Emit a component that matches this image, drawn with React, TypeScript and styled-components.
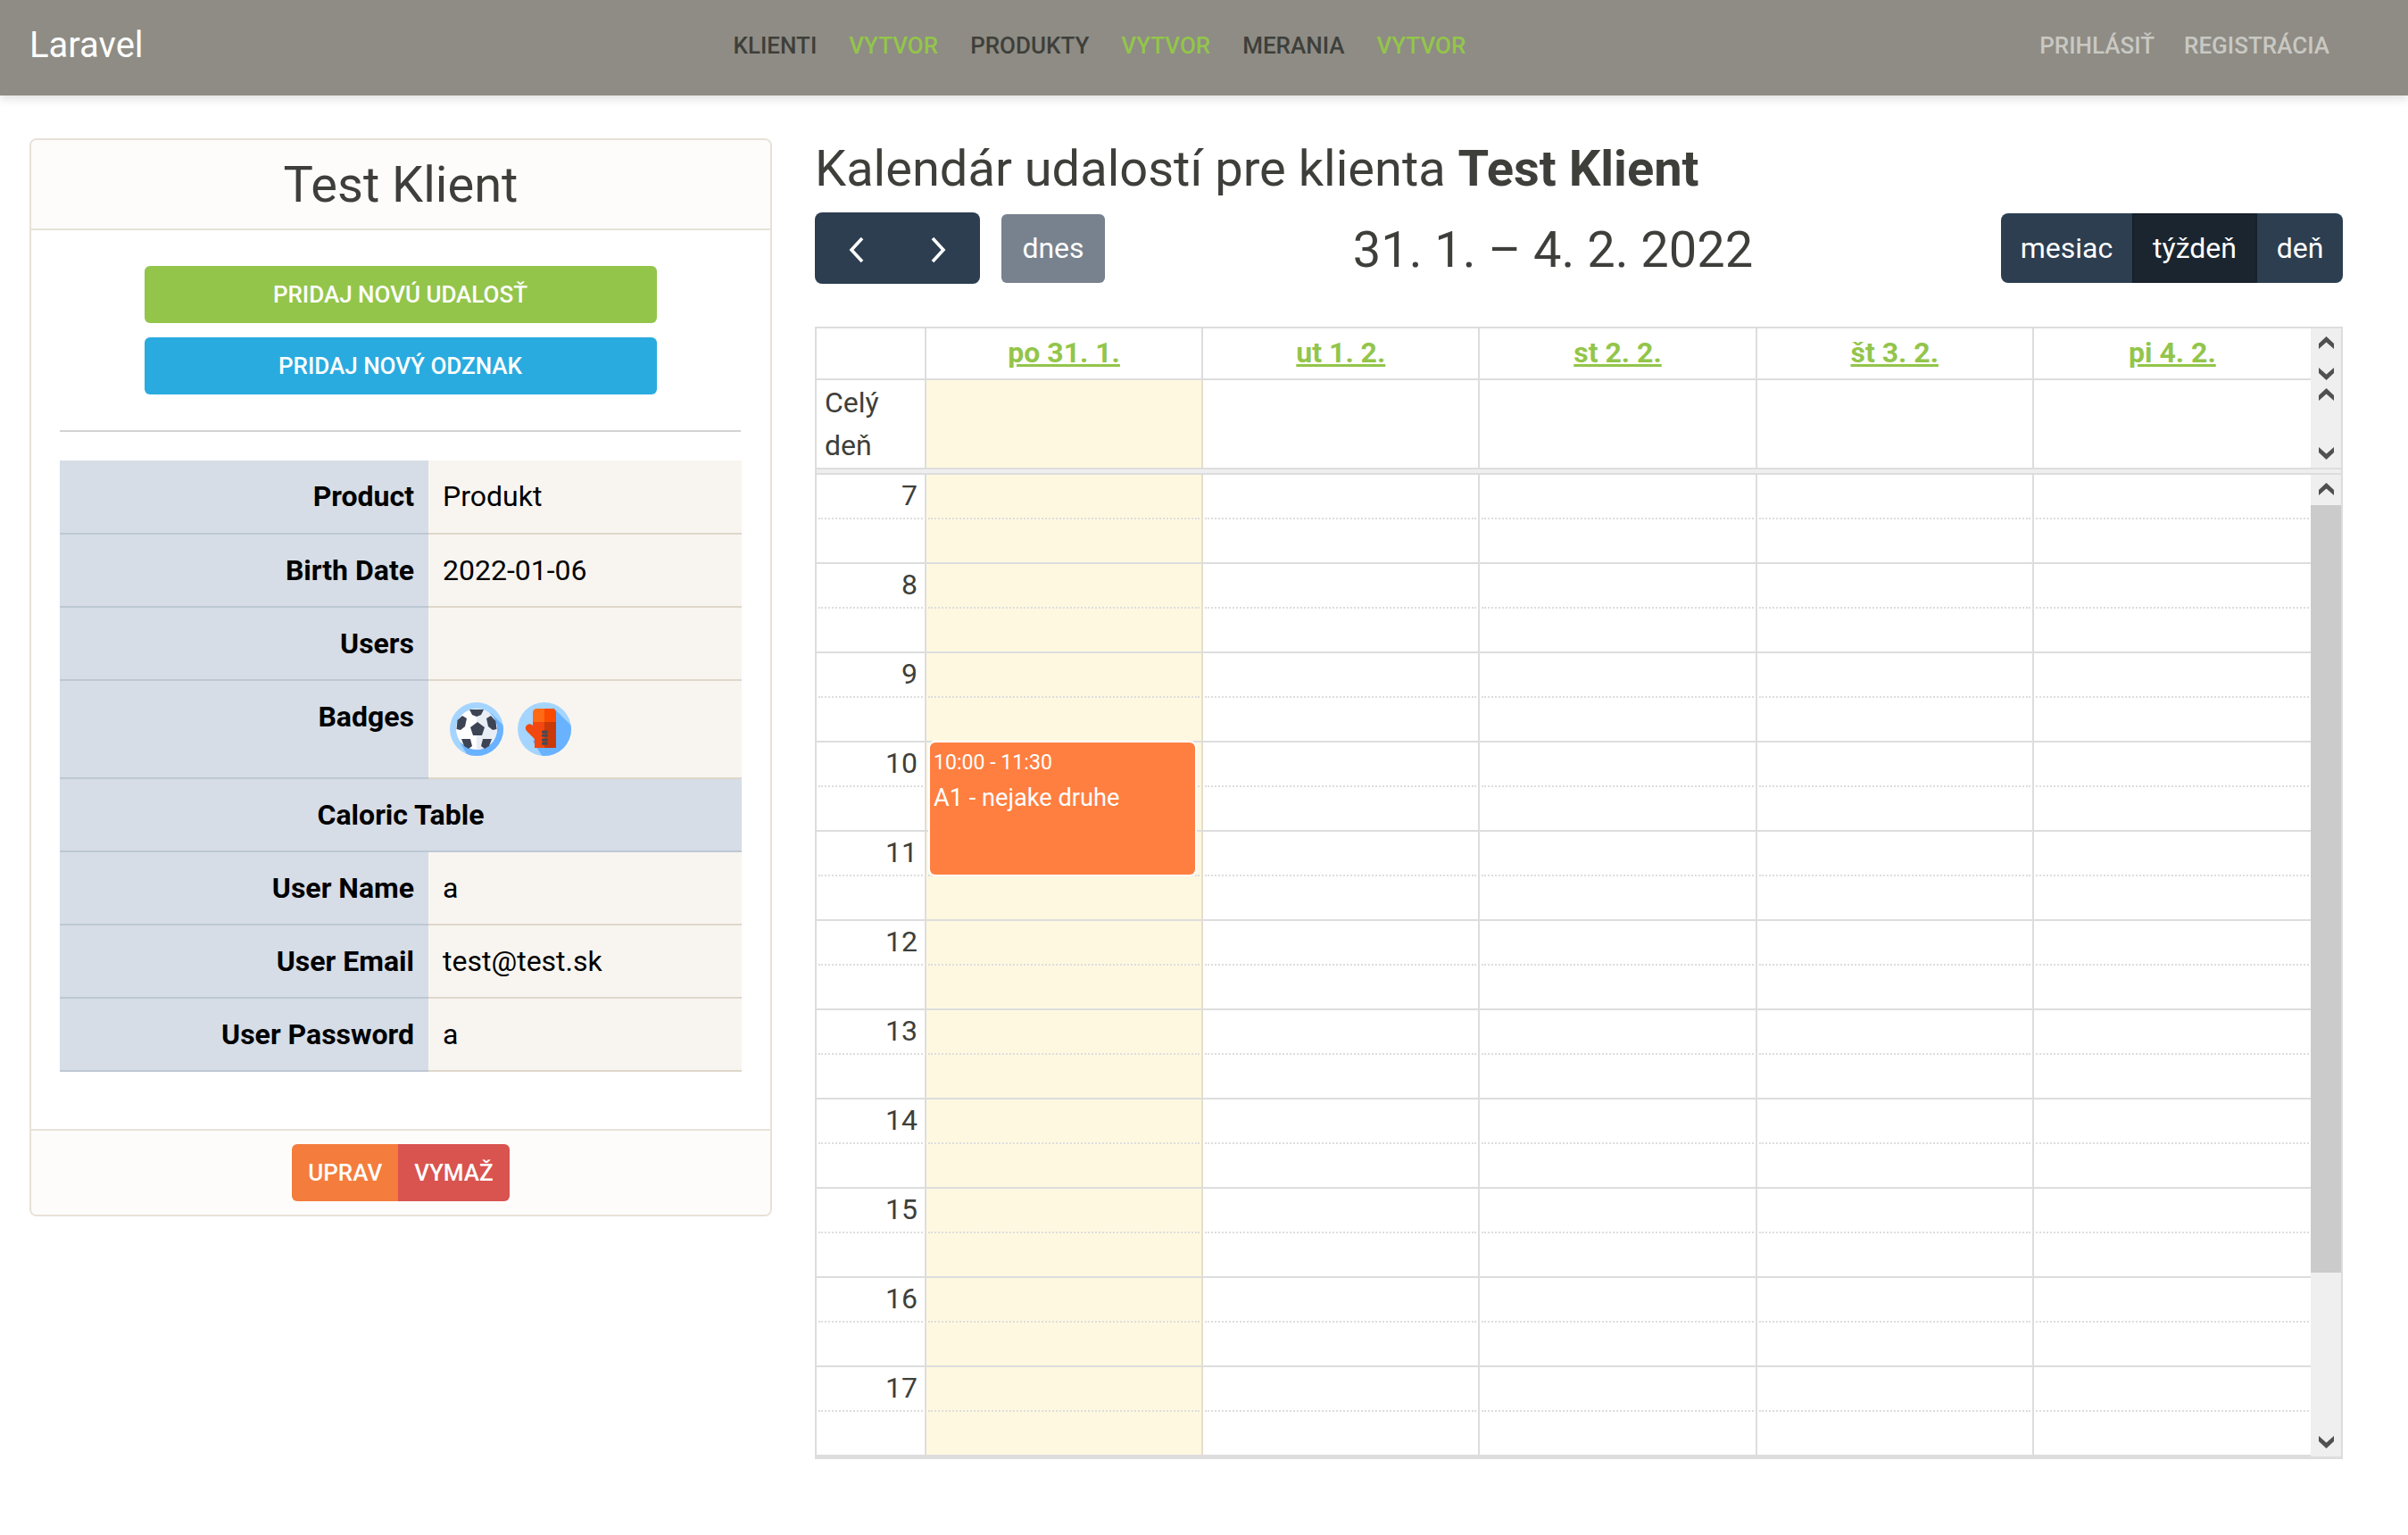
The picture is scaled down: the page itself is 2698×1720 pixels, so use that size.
import React from 'react';
import styled, { createGlobalStyle } from 'styled-components';

const GlobalStyle = createGlobalStyle`
    * {
        box-sizing: border-box;
    }
    html, body {
        margin: 0;
        background: #fff;
        font-family: Roboto, "Liberation Sans", sans-serif;
        font-size: 32px;
        color: #3e3f3a;
    }
`;

const Navbar = styled.nav`
    height: 107px;
    padding: 0 88px 5px 33px;
    display: flex;
    align-items: center;
    background-color: #8e8c84;
    box-shadow: 0 4px 10px rgba(0, 0, 0, 0.12);
`;

const Brand = styled.span`
    font-size: 40px;
    color: #fff;
    margin-bottom: 2px;
`;

const NavList = styled.div`
    display: flex;
    gap: 36px;
    margin: 0 auto;
    padding-left: 18px;
`;

const AuthList = styled.div`
    display: flex;
    gap: 33px;
`;

const NavLink = styled.a<{ $tone: string }>`
    font-size: 26px;
    font-weight: 500;
    text-transform: uppercase;
    color: ${props => props.$tone};
`;

const Page = styled.main`
    display: flex;
    align-items: flex-start;
    gap: 48px;
    padding: 48px 73px 0 33px;
`;

const Card = styled.section`
    width: 832px;
    flex-shrink: 0;
    border: 2px solid #e7e1d7;
    border-radius: 8px;
    overflow: hidden;
`;

const CardHeader = styled.header`
    height: 101px;
    border-bottom: 2px solid #e7e1d7;
    background-color: #fdfcfb;
    display: flex;
    align-items: center;
    justify-content: center;
    font-size: 56px;
`;

const CardBody = styled.div`
    padding: 40px 33px 64px 32px;
    display: flex;
    flex-direction: column;
`;

const ActionButton = styled.div<{ $bg: string }>`
    width: 574px;
    height: 64px;
    margin: 0 auto 16px;
    display: flex;
    align-items: center;
    justify-content: center;
    border-radius: 6px;
    background-color: ${props => props.$bg};
    color: #fff;
    font-size: 26px;
    font-weight: 500;
    text-transform: uppercase;
`;

const Rule = styled.hr`
    width: 100%;
    margin: 24px 0 32px;
    border: none;
    border-top: 2px solid #d3d3d3;
`;

const InfoTable = styled.table`
    width: 764px;
    border-collapse: collapse;
    table-layout: fixed;
    color: #000;
`;

const HeadCell = styled.th<{ $center?: boolean }>`
    width: 413px;
    padding: 21px 16px 0;
    height: 82px;
    vertical-align: top;
    text-align: ${props => props.$center ? 'center' : 'right'};
    font-weight: 700;
    line-height: 38px;
    background-color: #d6dde6;
    border-bottom: 2px solid #bdc8d4;
`;

const ValueCell = styled.td`
    padding: 21px 16px 0;
    height: 82px;
    vertical-align: top;
    line-height: 38px;
    background-color: #f8f5f0;
    border-bottom: 2px solid #dfd7ca;
`;

const BadgeList = styled.div`
    display: flex;
    gap: 16px;
    padding: 3px 8px 24px;
`;

const CardFooter = styled.footer`
    height: 96px;
    border-top: 2px solid #e7e1d7;
    background-color: #fdfcfb;
    display: flex;
    justify-content: center;
    padding-top: 15px;
`;

const FooterButton = styled.div<{ $bg: string; $side: 'left' | 'right' }>`
    height: 64px;
    padding: 0 18px;
    display: flex;
    align-items: center;
    background-color: ${props => props.$bg};
    border-radius: ${props => props.$side === 'left' ? '6px 0 0 6px' : '0 6px 6px 0'};
    color: #fff;
    font-size: 26px;
    font-weight: 500;
`;

const CalendarColumn = styled.div`
    flex: 1;
    min-width: 0;
`;

const PageTitle = styled.h3`
    margin: 0;
    height: 83px;
    padding-top: 1px;
    font-size: 56px;
    font-weight: 400;
    line-height: 66px;
`;

const Toolbar = styled.div`
    height: 128px;
    display: flex;
    justify-content: space-between;
    align-items: flex-start;
`;

const ToolbarGroup = styled.div`
    display: flex;
    gap: 24px;
    align-items: center;
    height: 80px;
`;

const NavGroup = styled.div`
    display: flex;
    height: 80px;
    border-radius: 8px;
    overflow: hidden;
    background-color: #2c3e50;
`;

const ViewGroup = styled(NavGroup)`
    height: 78px;
    margin-top: 1px;
`;

const ArrowButton = styled.div<{ $side: 'left' | 'right' }>`
    width: 92.5px;
    padding-top: 3px;
    padding-left: ${props => props.$side === 'left' ? '2px' : '0'};
    padding-right: ${props => props.$side === 'right' ? '1px' : '0'};
    display: flex;
    align-items: center;
    justify-content: center;
`;

const TodayButton = styled.div`
    width: 116px;
    height: 77px;
    display: flex;
    align-items: center;
    justify-content: center;
    border-radius: 6px;
    background-color: #78828e;
    color: #fff;
`;

const DateRange = styled.h2`
    margin: 0;
    padding-top: 2px;
    font-size: 56px;
    font-weight: 400;
    line-height: 80px;
`;

const ViewButton = styled.div<{ $active?: boolean; $width: number }>`
    width: ${props => props.$width}px;
    display: flex;
    align-items: center;
    justify-content: center;
    color: #fff;
    background-color: ${props => props.$active ? '#1a252f' : 'transparent'};
    box-shadow: ${props => props.$active ? 'inset 0 0 0 2px #17212b' : 'none'};
`;

const Frame = styled.div`
    border: 2px solid #ddd;
    border-bottom-width: 3px;
`;

const FrameRow = styled.div`
    display: flex;
`;

const DayGrid = styled.div<{ $height: number; $lined?: boolean }>`
    flex: 1;
    height: ${props => props.$height}px;
    display: grid;
    grid-template-columns: 123px repeat(5, 1fr);
    border-bottom: ${props => props.$lined ? '2px solid #ddd' : 'none'};
`;

const GridCell = styled.div<{ $today?: boolean; $last?: boolean }>`
    position: relative;
    background-color: ${props => props.$today ? '#fff8e0' : 'transparent'};
    border-right: ${props => props.$last ? 'none' : props.$today ? '2px solid #e3dfcc' : '2px solid #ddd'};
`;

const DayLink = styled.a`
    display: block;
    text-align: center;
    padding-top: 8px;
    line-height: 38px;
    font-weight: 700;
    color: #93c54b;
    text-decoration: underline;
`;

const AllDayLabel = styled.div`
    padding: 1px 10px 0 9px;
    line-height: 48px;
`;

const Divider = styled.div`
    height: 8px;
    background-color: #eee;
    border-top: 2px solid #ddd;
    border-bottom: 2px solid #ddd;
`;

const TimeBody = styled.div`
    flex: 1;
    display: flex;
    flex-direction: column;
`;

const HalfSlot = styled.div`
    height: 50px;
    margin: 0 2px;
    padding: 4px 6px 0 0;
    border-bottom: 2px dotted #ddd;
    text-align: right;
    line-height: 38px;
`;

const Scrollbar = styled.div<{ $height: number }>`
    width: 34px;
    height: ${props => props.$height}px;
    display: flex;
    flex-direction: column;
    background-color: #efefef;
`;

const ScrollButton = styled.div<{ $size?: number }>`
    height: ${props => props.$size || 32}px;
    flex-shrink: 0;
    display: flex;
    align-items: center;
    justify-content: center;
`;

const ScrollSpace = styled.div`
    flex: 1;
`;

const ScrollThumb = styled.div`
    height: 860px;
    margin-top: 2px;
    background-color: #cbcbcb;
`;

const EventBox = styled.div`
    position: absolute;
    z-index: 2;
    top: 0;
    left: 4px;
    width: 297px;
    height: 148px;
    padding: 4px;
    border-radius: 6px;
    background-color: #ff7f40;
    box-shadow: 0 0 0 2px #fff;
    color: #fff;
    font-size: 27.2px;
    line-height: 40px;
`;

const EventTime = styled.div`
    font-size: 23.100px;
    line-height: 38px;
`;

const Chevron: React.FC<{ dir: 'up' | 'down' }> = ({ dir }) => (
    <svg width="17" height="14" viewBox="0 0 17 14">
        <polygon
            points={dir === 'up' ? '8.5,0 17,8 17,14 8.5,6.500 0,14 0,8' : '8.5,14 17,6 17,0 8.5,7.500 0,0 0,6'}
            fill="#505050"
        />
    </svg>
);

const ArrowIcon: React.FC<{ dir: 'left' | 'right' }> = ({ dir }) => (
    <svg width="20" height="30" viewBox="0 0 20 30">
        <polyline
            points={dir === 'left' ? '16,2 4,15 16,28' : '4,2 16,15 4,28'}
            fill="none"
            stroke="#fff"
            strokeWidth="3.6"
        />
    </svg>
);

const SoccerBadge = () => (
    <svg width="60" height="60" viewBox="0 0 60 60">
        <defs>
            <clipPath id="ball-round"><circle cx="30" cy="30" r="30" /></clipPath>
        </defs>
        <circle cx="30" cy="30" r="30" fill="#a5d5ff" />
        <polygon points="46,12 70,36 60,70 26,70 12,46" fill="#69b2ff" clipPath="url(#ball-round)" />
        <circle cx="30" cy="30" r="23" fill="#fff" />
        <path d="M30 7a23 23 0 0 1 0 46z" fill="#e9edf5" />
        <polygon points="31,22 39,28 36,37 26,37 23,28" fill="#3d4454" />
        <polygon points="22,8 38,8 35,14 30,16 25,14" fill="#3d4454" />
        <polygon points="14,15 19,18 17,27 12,31 7.5,30 8.500,20" fill="#3d4454" />
        <polygon points="46,15 51.500,21 52.500,30 48,31 43,27 41,18" fill="#3d4454" />
        <polygon points="13,41 23,41 25,49 21,52 16,49" fill="#3d4454" />
        <polygon points="37,41 47,41 44,49 39,52 35,49" fill="#3d4454" />
    </svg>
);

const GloveBadge = () => (
    <svg width="60" height="60" viewBox="0 0 60 60">
        <defs>
            <clipPath id="glove-round"><circle cx="30" cy="30" r="30" /></clipPath>
        </defs>
        <circle cx="30" cy="30" r="30" fill="#a5d5ff" />
        <polygon points="40,6 70,36 60,70 34,70 17,44" fill="#69b2ff" clipPath="url(#glove-round)" />
        <path d="M17 22 L17 12 Q17 7 22 7 L30 7 L30 22z" fill="#ff6a13" />
        <path d="M30 7 L38 7 Q43 7 43 12 L43 22 L30 22z" fill="#f94a00" />
        <path d="M17 22 L30 22 L30 51 L19 51 L19 41 L10 32 Q7 28 11 25 Q14 23 17 26z" fill="#f2470e" />
        <rect x="30" y="22" width="13" height="29" fill="#c93a08" />
        <g fill="#4a4a55">
            <rect x="27" y="32" width="7" height="2.500" />
            <rect x="27" y="36" width="7" height="2.500" />
            <rect x="27" y="41" width="7" height="2.500" />
            <rect x="27" y="45" width="7" height="2.500" />
            <rect x="28.500" y="31" width="1.500" height="8" />
            <rect x="31" y="31" width="1.500" height="8" />
            <rect x="28.500" y="40" width="1.500" height="8" />
            <rect x="31" y="40" width="1.500" height="8" />
        </g>
    </svg>
);

const mainLinks = [
    { label: 'Klienti', tone: '#3e3f3a' },
    { label: 'Vytvor', tone: '#93c54b' },
    { label: 'Produkty', tone: '#3e3f3a' },
    { label: 'Vytvor', tone: '#93c54b' },
    { label: 'Merania', tone: '#3e3f3a' },
    { label: 'Vytvor', tone: '#93c54b' },
];

const days = ['po 31. 1.', 'ut 1. 2.', 'st 2. 2.', 'št 3. 2.', 'pi 4. 2.'];
const hours = [7, 8, 9, 10, 11, 12, 13, 14, 15, 16, 17];

const App: React.FC = () => {
    return (
        <>
            <GlobalStyle />
            <Navbar>
                <Brand>Laravel</Brand>
                <NavList>
                    {mainLinks.map((link, i) => (
                        <NavLink key={i} $tone={link.tone}>{link.label}</NavLink>
                    ))}
                </NavList>
                <AuthList>
                    <NavLink $tone="#c9c8c3">Prihlásiť</NavLink>
                    <NavLink $tone="#c9c8c3">Registrácia</NavLink>
                </AuthList>
            </Navbar>
            <Page>
                <Card>
                    <CardHeader>Test Klient</CardHeader>
                    <CardBody>
                        <ActionButton $bg="#93c54b">Pridaj novú udalosť</ActionButton>
                        <ActionButton $bg="#29abe0">Pridaj nový odznak</ActionButton>
                        <Rule />
                        <InfoTable>
                            <tbody>
                                <tr><HeadCell>Product</HeadCell><ValueCell>Produkt</ValueCell></tr>
                                <tr><HeadCell>Birth Date</HeadCell><ValueCell>2022-01-06</ValueCell></tr>
                                <tr><HeadCell>Users</HeadCell><ValueCell /></tr>
                                <tr>
                                    <HeadCell>Badges</HeadCell>
                                    <ValueCell>
                                        <BadgeList>
                                            <SoccerBadge />
                                            <GloveBadge />
                                        </BadgeList>
                                    </ValueCell>
                                </tr>
                                <tr><HeadCell $center colSpan={2}>Caloric Table</HeadCell></tr>
                                <tr><HeadCell>User Name</HeadCell><ValueCell>a</ValueCell></tr>
                                <tr><HeadCell>User Email</HeadCell><ValueCell>test@test.sk</ValueCell></tr>
                                <tr><HeadCell>User Password</HeadCell><ValueCell>a</ValueCell></tr>
                            </tbody>
                        </InfoTable>
                    </CardBody>
                    <CardFooter>
                        <FooterButton $bg="#f47c3c" $side="left">UPRAV</FooterButton>
                        <FooterButton $bg="#d9534f" $side="right">VYMAŽ</FooterButton>
                    </CardFooter>
                </Card>
                <CalendarColumn>
                    <PageTitle>Kalendár udalostí pre klienta <strong>Test Klient</strong></PageTitle>
                    <Toolbar>
                        <ToolbarGroup>
                            <NavGroup>
                                <ArrowButton $side="left"><ArrowIcon dir="left" /></ArrowButton>
                                <ArrowButton $side="right"><ArrowIcon dir="right" /></ArrowButton>
                            </NavGroup>
                            <TodayButton>dnes</TodayButton>
                        </ToolbarGroup>
                        <DateRange>31. 1. – 4. 2. 2022</DateRange>
                        <ViewGroup>
                            <ViewButton $width={147}>mesiac</ViewButton>
                            <ViewButton $width={140} $active>týždeň</ViewButton>
                            <ViewButton $width={96}>deň</ViewButton>
                        </ViewGroup>
                    </Toolbar>
                    <Frame>
                        <FrameRow>
                            <DayGrid $height={58} $lined>
                                <GridCell />
                                {days.map((day, i) => (
                                    <GridCell key={day} $last={i === days.length - 1}>
                                        <DayLink>{day}</DayLink>
                                    </GridCell>
                                ))}
                            </DayGrid>
                            <Scrollbar $height={58}>
                                <ScrollButton><Chevron dir="up" /></ScrollButton>
                                <ScrollSpace />
                                <ScrollButton $size={14}><Chevron dir="down" /></ScrollButton>
                            </Scrollbar>
                        </FrameRow>
                        <FrameRow>
                            <DayGrid $height={98}>
                                <GridCell><AllDayLabel>Celý deň</AllDayLabel></GridCell>
                                {days.map((day, i) => (
                                    <GridCell key={day} $today={i === 0} $last={i === days.length - 1} />
                                ))}
                            </DayGrid>
                            <Scrollbar $height={98}>
                                <ScrollButton><Chevron dir="up" /></ScrollButton>
                                <ScrollSpace />
                                <ScrollButton><Chevron dir="down" /></ScrollButton>
                            </Scrollbar>
                        </FrameRow>
                        <Divider />
                        <FrameRow>
                            <TimeBody>
                                {hours.map(hour => (
                                    <DayGrid key={hour} $height={100} $lined>
                                        <GridCell><HalfSlot>{hour}</HalfSlot></GridCell>
                                        {days.map((day, i) => (
                                            <GridCell key={day} $today={i === 0} $last={i === days.length - 1}>
                                                <HalfSlot />
                                                {i === 0 && hour === 10 && (
                                                    <EventBox>
                                                        <EventTime>10:00 - 11:30</EventTime>
                                                        <div>A1 - nejake druhe</div>
                                                    </EventBox>
                                                )}
                                            </GridCell>
                                        ))}
                                    </DayGrid>
                                ))}
                            </TimeBody>
                            <Scrollbar $height={1100}>
                                <ScrollButton><Chevron dir="up" /></ScrollButton>
                                <ScrollThumb />
                                <ScrollSpace />
                                <ScrollButton><Chevron dir="down" /></ScrollButton>
                            </Scrollbar>
                        </FrameRow>
                    </Frame>
                </CalendarColumn>
            </Page>
        </>
    );
};

export default App;
